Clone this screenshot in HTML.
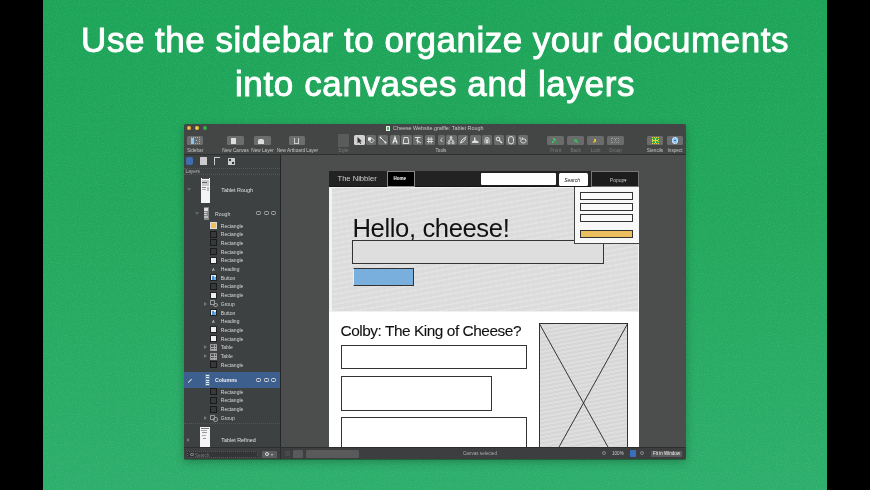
<!DOCTYPE html>
<html><head><meta charset="utf-8"><style>
*{box-sizing:border-box;margin:0;padding:0}
html,body{width:870px;height:490px;overflow:hidden;background:#000;font-family:"Liberation Sans",sans-serif}
div,span{position:absolute;white-space:nowrap}
#bg{will-change:transform;left:43px;top:0;width:784px;height:490px;background:linear-gradient(180deg,#1ca458 0%,#21a75b 40%,#28ab64 75%,#2dae6b 100%)}
.title{left:0;width:784px;text-align:center;color:#fff;font-weight:normal;font-size:35px;-webkit-text-stroke:0.9px #fff}
#win{will-change:transform;left:184px;top:124px;width:502px;height:335px;background:#444646;overflow:hidden;border-radius:1.5px;box-shadow:0 1px 0 rgba(0,0,0,0.3),0 3px 8px rgba(0,0,0,0.25)}
#sb{left:0;top:31px;width:96px;height:292px;background:#3e4141}
#sbline{left:96px;top:31px;width:1px;height:292px;background:#262626}
#cv{left:97px;top:31px;width:405px;height:292px;background:#4c4e4e;overflow:hidden}
#tbline{left:0;top:30px;width:502px;height:1px;background:#2e3030}
#bot{left:0;top:323px;width:502px;height:12px;background:#3c3e3f;border-top:1px solid #2c2e2f}
.lbl{font-size:4.7px;color:#c4c4c4;transform:translateX(-50%);line-height:5px}
.dim{color:#7a7a7a}
.tb{top:12px;height:8.5px;background:#6c6e6e;border-radius:1.5px}
.tool{top:10.7px;height:10.6px;width:10.4px;background:#6a6c6c;border-radius:1.5px}
.it{font-size:5px;color:#d8d8d8;line-height:6px}
.ico{width:7.2px;height:7px;border:0.8px solid #1a1a1a;background:#383a3a;border-radius:0.5px}
.tri{width:0;height:0;border-left:3px solid #777;border-top:2px solid transparent;border-bottom:2px solid transparent}
.dots{height:0;border-top:1px dotted #555}
</style></head><body>
<div id="bg"><svg width="784" height="490" style="position:absolute;left:0;top:0"><filter id="nz"><feTurbulence type="fractalNoise" baseFrequency="0.9" numOctaves="1" seed="3"/><feColorMatrix values="0 0 0 0 1  0 0 0 0 1  0 0 0 0 1  0 0 0 1.2 -0.55"/></filter><rect width="784" height="490" filter="url(#nz)" opacity="0.22"/></svg><div class="title" style="top:19.5px;letter-spacing:0.5px">Use the sidebar to organize your documents</div><div class="title" style="top:63.5px;letter-spacing:0.62px">into canvases and layers</div></div>
<div id="win">
<div style="left:2.6999999999999997px;top:2.2px;width:4.2px;height:4.2px;border-radius:50%;background:#f2b93c"></div><div style="left:10.9px;top:2.2px;width:4.2px;height:4.2px;border-radius:50%;background:#f5c142"></div><div style="left:18.799999999999997px;top:2.2px;width:4.2px;height:4.2px;border-radius:50%;background:#2fb14c"></div><div style="left:202px;top:1.8px;width:4.2px;height:5.4px;background:#e8f4e8;border-radius:0.5px"><div style="left:0.8px;top:1.2px;width:2.6px;height:3.4px;background:#4cb860"></div></div><div style="left:209px;top:1.2px;font-size:5.4px;color:#c8c8c8;line-height:6px">Cheese Website.graffle: Tablet Rough</div><div class="tb" style="left:2.8px;width:16.7px;"><div style="left:4px;top:1.2px;width:9px;height:6.5px;border:0.7px dotted #aaa"></div><div style="left:4.2px;top:1.5px;width:3.5px;height:6px;background:#8cc4f0"></div><div style="left:9px;top:3.5px;width:1.5px;height:1.5px;background:#8cc4f0"></div></div><div class="lbl" style="left:11.15px;top:24px">Sidebar</div><div class="tb" style="left:43.2px;width:16.599999999999994px;"><div style="left:4px;top:2px;width:5px;height:6px;background:#ddd"></div></div><div class="lbl" style="left:51.5px;top:24px">New Canvas</div><div class="tb" style="left:70.1px;width:16.80000000000001px;"><div style="left:4px;top:2.5px;width:6px;height:5px;background:#ddd;border-radius:2px 2px 0 0"></div></div><div class="lbl" style="left:78.5px;top:24px">New Layer</div><div class="tb" style="left:105.3px;width:16.10000000000001px;"><div style="left:5px;top:2px;width:5px;height:6px;border:1px solid #ccc;border-top:none"></div></div><div class="lbl" style="left:113.35px;top:24px">New Artboard Layer</div><div style="left:153.6px;top:10.3px;width:11.9px;height:12.7px;background:#5a5c5c;border-radius:1px"></div><div class="lbl dim" style="left:159.5px;top:24px">Style</div><div class="tool" style="left:170.3px;width:10.4px;background:#d2d2d2"><svg width="10.4" height="10.6" viewBox="0 0 10.4 10.6" style="position:absolute;left:0;top:0"><path d="M3.5 2 L3.5 8.5 L5 7 L6.3 9 L7.2 8.5 L6 6.5 L8 6.3 Z" fill="#333"/></svg></div><div class="tool" style="left:182.0px;width:10.4px;"><svg width="10.4" height="10.6" viewBox="0 0 10.4 10.6" style="position:absolute;left:0;top:0"><path d="M2.5 3 L5.5 3 L8 5.5 L5.5 8 L3 5.5 Z" fill="none" stroke="#eee" stroke-width="0.9"/><rect x="2" y="2.5" width="3" height="3" fill="#eee"/></svg></div><div class="tool" style="left:194.0px;width:10.4px;"><svg width="10.4" height="10.6" viewBox="0 0 10.4 10.6" style="position:absolute;left:0;top:0"><path d="M2.5 2.5 L7.5 7.5" stroke="#eee" stroke-width="0.9"/><circle cx="2.5" cy="2.5" r="0.9" fill="#eee"/><circle cx="7.5" cy="7.5" r="1" fill="#eee"/></svg></div><div class="tool" style="left:206.0px;width:10.4px;"><svg width="10.4" height="10.6" viewBox="0 0 10.4 10.6" style="position:absolute;left:0;top:0"><path d="M2.8 8.5 L5 2 L7.2 8.5 M3.6 6.3 L6.4 6.3" fill="none" stroke="#eee" stroke-width="1.1"/></svg></div><div class="tool" style="left:217.4px;width:10.4px;"><svg width="10.4" height="10.6" viewBox="0 0 10.4 10.6" style="position:absolute;left:0;top:0"><path d="M3 2.5 L7 2.5 L7.8 8.5 L2.2 8.5 Z" fill="none" stroke="#eee" stroke-width="0.9"/></svg></div><div class="tool" style="left:229.0px;width:10.4px;"><svg width="10.4" height="10.6" viewBox="0 0 10.4 10.6" style="position:absolute;left:0;top:0"><path d="M2 2.5 L7.5 2.5 M4.7 2.5 L4.7 8.5 M3 5 L8 8" fill="none" stroke="#eee" stroke-width="0.9"/></svg></div><div class="tool" style="left:241.0px;width:10.4px;"><svg width="10.4" height="10.6" viewBox="0 0 10.4 10.6" style="position:absolute;left:0;top:0"><path d="M3.8 2 L3.8 8.5 M6.2 2 L6.2 8.5 M2 4.2 L8 4.2 M2 6.5 L8 6.5" fill="none" stroke="#eee" stroke-width="0.8"/></svg></div><div class="tool" style="left:253.6px;width:7.2px;"><svg width="7.2" height="10.6" viewBox="0 0 7.2 10.6" style="position:absolute;left:0;top:0"><path d="M4.5 3 L2.5 5 L4.5 7" fill="none" stroke="#eee" stroke-width="0.9"/></svg></div><div class="tool" style="left:262.3px;width:10.4px;"><svg width="10.4" height="10.6" viewBox="0 0 10.4 10.6" style="position:absolute;left:0;top:0"><path d="M5 2 L5 5 M3 5 L7 5 M3 5 L3 7 M7 5 L7 7" fill="none" stroke="#eee" stroke-width="0.8"/><circle cx="3" cy="7.8" r="1.1" fill="none" stroke="#eee" stroke-width="0.8"/><circle cx="7" cy="7.8" r="1.1" fill="none" stroke="#eee" stroke-width="0.8"/><circle cx="5" cy="2.5" r="1" fill="none" stroke="#eee" stroke-width="0.8"/></svg></div><div class="tool" style="left:274.0px;width:10.4px;"><svg width="10.4" height="10.6" viewBox="0 0 10.4 10.6" style="position:absolute;left:0;top:0"><path d="M2.5 8 L4 5 L6.5 3 L7.5 4 L5.5 6.5 Z M6.5 3 L8.3 1.8" fill="none" stroke="#eee" stroke-width="0.9"/></svg></div><div class="tool" style="left:286.3px;width:10.4px;"><svg width="10.4" height="10.6" viewBox="0 0 10.4 10.6" style="position:absolute;left:0;top:0"><path d="M2 8 L8.5 8 L8.5 6.5 L6.5 5.5 L5.5 5.5 L5.5 2.5 L4 2.5 L4 5.5 L2 6.5 Z" fill="#ddd"/></svg></div><div class="tool" style="left:298.0px;width:10.4px;"><svg width="10.4" height="10.6" viewBox="0 0 10.4 10.6" style="position:absolute;left:0;top:0"><path d="M3 8.5 L3 4.5 A2 2 0 0 1 7 4.5 L7 8.5 M4.5 8.5 L4.5 4.5 A0.5 0.5 0 0 1 5.5 4.5 L5.5 8.5" fill="none" stroke="#eee" stroke-width="0.8"/></svg></div><div class="tool" style="left:310.0px;width:10.4px;"><svg width="10.4" height="10.6" viewBox="0 0 10.4 10.6" style="position:absolute;left:0;top:0"><circle cx="4" cy="4" r="1.8" fill="none" stroke="#eee" stroke-width="0.9"/><path d="M5.3 5.3 L8 8" stroke="#eee" stroke-width="1.1"/></svg></div><div class="tool" style="left:322.0px;width:10.4px;"><svg width="10.4" height="10.6" viewBox="0 0 10.4 10.6" style="position:absolute;left:0;top:0"><path d="M2.5 6 L2.5 4 A2.5 2.5 0 0 1 7.5 4 L7.5 6.5 A2.5 2.5 0 0 1 2.5 6.5 Z" fill="none" stroke="#eee" stroke-width="0.9"/></svg></div><div class="tool" style="left:333.8px;width:10.4px;"><svg width="10.4" height="10.6" viewBox="0 0 10.4 10.6" style="position:absolute;left:0;top:0"><path d="M3 6 L3 3.5 M4.5 5 L4.5 2.5 M6 5 L6 3 M7.5 5.5 L7.5 4 M2.5 6 A3 3 0 0 0 8 6.5 L8 5" fill="none" stroke="#eee" stroke-width="0.8"/><circle cx="2" cy="3" r="0.7" fill="#eee"/></svg></div><div class="lbl" style="left:257px;top:24px">Tools</div><div class="tb" style="left:363.4px;width:16.600000000000023px;background:#6a6c6c"><div style="left:5.5px;top:1.5px;width:2.5px;height:2.5px;background:#3cc060"></div><div style="left:7px;top:3.2px;width:2px;height:2px;background:#3cc060"></div><div style="left:5px;top:4.5px;width:2px;height:2px;background:#3cc060"></div><div style="left:8.5px;top:5.5px;width:2px;height:2px;background:#2a9a48"></div></div><div class="lbl dim" style="left:371.7px;top:24px">Front</div><div class="tb" style="left:383.3px;width:16.599999999999966px;background:#6a6c6c"><div style="left:7px;top:3px;width:2.5px;height:2.5px;background:#3cc060;opacity:.7"></div><div style="left:9px;top:5px;width:2px;height:2px;background:#3cc060;opacity:.7"></div></div><div class="lbl dim" style="left:391.6px;top:24px">Back</div><div class="tb" style="left:403.4px;width:16.600000000000023px;background:#6a6c6c"><div style="left:7px;top:3px;width:2px;height:3px;background:#e0c040"></div><div style="left:6px;top:5px;width:2px;height:2px;background:#c0a030"></div></div><div class="lbl dim" style="left:411.7px;top:24px">Lock</div><div class="tb" style="left:423.3px;width:16.30000000000001px;background:#6a6c6c"><div style="left:4px;top:1.5px;width:8px;height:5.5px;border:0.7px dotted #999"></div><div style="left:7.5px;top:3px;width:1.5px;height:1.5px;background:#4c8"></div></div><div class="lbl dim" style="left:431.45000000000005px;top:24px">Group</div><div class="tb" style="left:463px;width:16px;"><div style="left:4.5px;top:1px;width:7px;height:6.5px;background:#35a84a;border:0.9px dotted #e8d040"></div><div style="left:7.5px;top:1.5px;width:0.7px;height:5.5px;background:#e8d040"></div><div style="left:5px;top:4px;width:6px;height:0.7px;background:#e8d040"></div></div><div class="lbl" style="left:471.0px;top:24px">Stencils</div><div class="tb" style="left:482.9px;width:16.30000000000001px;"><div style="left:4.8px;top:1px;width:6.8px;height:6.8px;background:#8cc8f8;border-radius:50%;border:1px dotted #fff"></div><div style="left:7.3px;top:3.5px;width:1.8px;height:1.8px;background:#2a5fb0;border-radius:50%"></div></div><div class="lbl" style="left:491.04999999999995px;top:24px">Inspect</div><div id="tbline"></div>
<div id="sb"><div style="left:2px;top:2px;width:7px;height:8px;background:#3f6db0;border-radius:2px"></div><div style="left:16px;top:2px;width:7px;height:8px;background:#ccc;border-radius:0.5px"></div><div style="left:30px;top:2px;width:6px;height:8px;border-left:1px solid #ccc;border-top:1px solid #ccc"></div><div style="left:44px;top:2.5px;width:6.5px;height:7px;background:#ccc;border-radius:0.5px"><div style="left:1px;top:1px;width:2px;height:2px;background:#333"></div><div style="left:3.5px;top:4px;width:2px;height:2px;background:#333"></div></div><div class="dots" style="left:0;top:13px;width:96px"></div><div class="it" style="left:1.5px;top:13.5px;font-size:4.8px;color:#bbb">Layers</div><div class="dots" style="left:0;top:19px;width:96px"></div><div style="left:16.80000000000001px;top:22.599999999999994px;width:9.4px;height:25px;background:#f4f4f4"><div style="left:0.8px;top:0.5px;width:7.8px;height:1.2px;background:#555"></div><div style="left:0.8px;top:2.5px;width:7.8px;height:6px;background:#c8c8c8"></div><div style="left:1.5px;top:4px;width:5px;height:1px;background:#666"></div><div style="left:1.5px;top:9.5px;width:4px;height:1px;background:#888"></div><div style="left:1.5px;top:11px;width:4px;height:1px;background:#aaa"></div><div style="left:6.5px;top:9.5px;width:1.8px;height:3.5px;background:#bbb"></div></div><div class="it" style="left:37.2px;top:32.2px;font-size:5.4px;color:#e0e0e0;">Tablet Rough</div><div style="left:3px;top:32.69999999999999px;border-top:3px solid #666;border-left:2px solid transparent;border-right:2px solid transparent;width:0;height:0"></div><div style="left:19.599999999999994px;top:52px;width:5px;height:13.4px;background:#888"><div style="left:0.5px;top:0.5px;width:4px;height:3px;background:#ddd"></div><div style="left:0.5px;top:5px;width:3px;height:1px;background:#ccc"></div><div style="left:0.5px;top:7px;width:3px;height:1px;background:#ccc"></div><div style="left:0.5px;top:9px;width:4px;height:2px;background:#bbb"></div></div><div class="it" style="left:31.0px;top:55.7px;font-size:5.2px;color:#d8d8d8;">Rough</div><div style="left:11px;top:57px;border-top:3px solid #666;border-left:2px solid transparent;border-right:2px solid transparent;width:0;height:0"></div><div style="left:72px;top:56px;width:5px;height:4px;border:0.8px solid #aaa;border-radius:1.5px"></div><div style="left:80px;top:56px;width:5px;height:4px;border:0.8px solid #aaa;border-radius:1.5px"></div><div style="left:87px;top:56px;width:5px;height:4px;border:0.8px solid #aaa;border-radius:1.5px"></div><div class="it" style="left:36.8px;top:67.5px;font-size:5.0px;color:#d8d8d8;">Rectangle</div><div class="ico" style="left:26.1px;top:67.0px;background:#f0c050;border-color:#ddd"></div><div class="it" style="left:36.8px;top:76.2px;font-size:5.0px;color:#d8d8d8;">Rectangle</div><div class="ico" style="left:26.1px;top:75.7px"></div><div class="it" style="left:36.8px;top:84.9px;font-size:5.0px;color:#d8d8d8;">Rectangle</div><div class="ico" style="left:26.1px;top:84.4px"></div><div class="it" style="left:36.8px;top:93.6px;font-size:5.0px;color:#d8d8d8;">Rectangle</div><div class="ico" style="left:26.1px;top:93.1px"></div><div class="it" style="left:36.8px;top:102.3px;font-size:5.0px;color:#d8d8d8;">Rectangle</div><div class="ico" style="left:26.1px;top:101.8px;background:#eee;border-color:#222"></div><div class="it" style="left:36.8px;top:111.0px;font-size:5.0px;color:#d8d8d8;">Heading</div><div style="left:28.1px;top:111.5px;font-size:4px;color:#ccc">A</div><div class="it" style="left:36.8px;top:119.7px;font-size:5.0px;color:#d8d8d8;">Button</div><div class="ico" style="left:26.1px;top:119.2px;background:#dfeaf5;border-color:#222"><div style="left:1px;top:1px;width:2px;height:3.5px;background:#4a90d9"></div><div style="left:3px;top:2px;width:2px;height:2.5px;background:#6ab0e9"></div></div><div class="it" style="left:36.8px;top:128.4px;font-size:5.0px;color:#d8d8d8;">Rectangle</div><div class="ico" style="left:26.1px;top:127.9px"></div><div class="it" style="left:36.8px;top:137.1px;font-size:5.0px;color:#d8d8d8;">Rectangle</div><div class="ico" style="left:26.1px;top:136.6px;background:#eee;border-color:#222"></div><div class="it" style="left:36.8px;top:145.8px;font-size:5.0px;color:#d8d8d8;">Group</div><div class="ico" style="left:26.1px;top:145.3px;width:5px;height:5px;background:transparent;border-color:#999"></div><div class="ico" style="left:28.6px;top:147.8px;width:5px;height:4.5px;background:transparent;border-color:#999;border-radius:2px"></div><div class="tri" style="left:20.0px;top:146.8px"></div><div class="it" style="left:36.8px;top:154.5px;font-size:5.0px;color:#d8d8d8;">Button</div><div class="ico" style="left:26.1px;top:154.0px;background:#dfeaf5;border-color:#222"><div style="left:1px;top:1px;width:2px;height:3.5px;background:#4a90d9"></div><div style="left:3px;top:2px;width:2px;height:2.5px;background:#6ab0e9"></div></div><div class="it" style="left:36.8px;top:163.2px;font-size:5.0px;color:#d8d8d8;">Heading</div><div style="left:28.1px;top:163.7px;font-size:4px;color:#ccc">A</div><div class="it" style="left:36.8px;top:171.9px;font-size:5.0px;color:#d8d8d8;">Rectangle</div><div class="ico" style="left:26.1px;top:171.4px;background:#eee;border-color:#222"></div><div class="it" style="left:36.8px;top:180.6px;font-size:5.0px;color:#d8d8d8;">Rectangle</div><div class="ico" style="left:26.1px;top:180.1px;background:#eee;border-color:#222"></div><div class="it" style="left:36.8px;top:189.3px;font-size:5.0px;color:#d8d8d8;">Table</div><div class="ico" style="left:26.1px;top:188.8px;background:#555;border-color:#999"><div style="left:0;top:2px;width:6px;height:0.6px;background:#aaa"></div><div style="left:0;top:4px;width:6px;height:0.6px;background:#aaa"></div><div style="left:2.5px;top:0;width:0.6px;height:6px;background:#aaa"></div></div><div class="tri" style="left:20.0px;top:190.3px"></div><div class="it" style="left:36.8px;top:198.0px;font-size:5.0px;color:#d8d8d8;">Table</div><div class="ico" style="left:26.1px;top:197.5px;background:#555;border-color:#999"><div style="left:0;top:2px;width:6px;height:0.6px;background:#aaa"></div><div style="left:0;top:4px;width:6px;height:0.6px;background:#aaa"></div><div style="left:2.5px;top:0;width:0.6px;height:6px;background:#aaa"></div></div><div class="tri" style="left:20.0px;top:199.0px"></div><div class="it" style="left:36.8px;top:206.7px;font-size:5.0px;color:#d8d8d8;">Rectangle</div><div class="ico" style="left:26.1px;top:206.2px"></div><div style="left:0px;top:217.10000000000002px;width:96px;height:15.5px;background:#3c5f8e"></div><div style="left:21px;top:218.8px;width:4.5px;height:12.5px;background:#5d7ba3"><div style="left:0.5px;top:1px;width:3.5px;height:1px;background:#e8eef5"></div><div style="left:0.5px;top:3.5px;width:3px;height:1px;background:#e8eef5"></div><div style="left:0.5px;top:6px;width:3.5px;height:1px;background:#e8eef5"></div><div style="left:0.5px;top:8.5px;width:3px;height:1px;background:#e8eef5"></div><div style="left:0.5px;top:10.5px;width:3.5px;height:1px;background:#e8eef5"></div></div><div class="it" style="left:31.0px;top:222.0px;font-size:5.2px;color:#f0f0f0;font-weight:bold">Columns</div><div style="left:2px;top:222px;width:5px;height:5px;border-bottom:1px solid #ddd;transform:rotate(-45deg)"></div><div style="left:72px;top:223px;width:5px;height:4px;border:0.8px solid #ddd;border-radius:1.5px"></div><div style="left:80px;top:223px;width:5px;height:4px;border:0.8px solid #ddd;border-radius:1.5px"></div><div style="left:87px;top:223px;width:5px;height:4px;border:0.8px solid #ddd;border-radius:1.5px"></div><div class="it" style="left:36.8px;top:233.7px;font-size:5.0px;color:#d8d8d8;">Rectangle</div><div class="ico" style="left:26.1px;top:233.2px"></div><div class="it" style="left:36.8px;top:242.4px;font-size:5.0px;color:#d8d8d8;">Rectangle</div><div class="ico" style="left:26.1px;top:241.9px"></div><div class="it" style="left:36.8px;top:251.1px;font-size:5.0px;color:#d8d8d8;">Rectangle</div><div class="ico" style="left:26.1px;top:250.6px"></div><div class="it" style="left:36.8px;top:260.0px;font-size:5.0px;color:#d8d8d8;">Group</div><div class="ico" style="left:26.1px;top:259.5px;width:5px;height:5px;background:transparent;border-color:#999"></div><div class="ico" style="left:28.6px;top:262.0px;width:5px;height:4.5px;background:transparent;border-color:#999;border-radius:2px"></div><div class="tri" style="left:20.0px;top:261.0px"></div><div class="dots" style="left:0;top:268px;width:96px"></div><div style="left:16.400000000000006px;top:272.2px;width:10px;height:20px;background:#f4f4f4"><div style="left:1px;top:1px;width:8px;height:1px;background:#777"></div><div style="left:1px;top:3px;width:6px;height:1px;background:#aaa"></div><div style="left:1.5px;top:5px;width:5px;height:1px;background:#999"></div><div style="left:1.5px;top:8px;width:4px;height:1px;background:#aaa"></div><div style="left:3px;top:11px;width:3px;height:1px;background:#999"></div></div><div class="it" style="left:37.3px;top:282.0px;font-size:5.4px;color:#e0e0e0;">Tablet Refined</div><div class="tri" style="left:3px;top:283px"></div></div>
<div id="sbline"></div>
<div id="cv"><div style="left:48px;top:16px;width:309.7px;height:280px;background:#fff"></div><div style="left:48px;top:16px;width:309.7px;height:16px;background:#222;border-bottom:1.5px solid #151515"></div><div style="left:56.5px;top:20.19999999999999px;font-size:7.6px;color:#d0d0d0;line-height:8px">The Nibbler</div><div style="left:105.60000000000002px;top:15.5px;width:28px;height:16px;background:#000;border:1px solid #888"><div style="left:6px;top:4.5px;font-size:4.5px;color:#fff;font-weight:bold">Home</div></div><div style="left:200.2px;top:17.80000000000001px;width:75.2px;height:11.9px;background:#fff;border-radius:1px"></div><div style="left:278.20000000000005px;top:18.19999999999999px;width:29.2px;height:12.4px;background:#fff;border-radius:1.5px"><div style="left:5px;top:3.5px;font-size:5px;color:#222;font-style:italic">Search</div></div><div style="left:310.29999999999995px;top:16.400000000000006px;width:48px;height:15.8px;background:#1c1c1c;border:1px solid #777"><div style="left:17.5px;top:4.2px;font-size:5px;color:#c0c0c0">Popup&#9662;</div></div><div style="left:48px;top:32px;width:309.7px;height:124.6px;background:repeating-linear-gradient(-10deg,#dcdcdc 0px,#dcdcdc 3.5px,#e3e3e3 3.5px,#e3e3e3 5px);border:1.5px solid #f0f0f0;border-top:1px solid #f0f0f0;border-left:3px solid #f2f2f2"></div><div style="left:71.5px;top:60px;font-size:25.6px;color:#111;line-height:26px;letter-spacing:-0.38px">Hello, cheese!</div><div style="left:71.39999999999998px;top:84.69999999999999px;width:251.7px;height:24.1px;border:1px solid #333;background:#dedede"></div><div style="left:72.19999999999999px;top:112.5px;width:60.7px;height:18.5px;border:1px solid #333;border-left:1px solid #eee;background:#78afdd"></div><div style="left:293.29999999999995px;top:32.19999999999999px;width:64.4px;height:57.3px;background:#f8f8f8;border:1px solid #444;border-top:none;border-right:none"><div style="left:4.5px;top:5px;width:53.5px;height:7.5px;border:1.2px solid #333;background:#fafafa"></div><div style="left:4.5px;top:16.3px;width:53.5px;height:7.5px;border:1.2px solid #333;background:#fafafa"></div><div style="left:4.5px;top:27.2px;width:53.5px;height:7.5px;border:1.2px solid #333;background:#fafafa"></div><div style="left:4.5px;top:43px;width:53.5px;height:7.8px;border:1.2px solid #333;background:#ecc05e"></div></div><div style="left:59.5px;top:168px;font-size:15.4px;color:#111;line-height:16px;letter-spacing:-0.45px;-webkit-text-stroke:0.1px #111">Colby: The King of Cheese?</div><div style="left:59.69999999999999px;top:189.89999999999998px;width:186.0px;height:24.6px;border:1px solid #333;background:#fff"></div><div style="left:59.69999999999999px;top:220.89999999999998px;width:151.5px;height:35.0px;border:1px solid #333;background:#fff"></div><div style="left:59.69999999999999px;top:261.9px;width:186.0px;height:43.1px;border:1px solid #333;background:#fff"></div><div style="left:258.20000000000005px;top:168px;width:88.7px;height:160px;background:repeating-linear-gradient(-10deg,#d6d6d6 0px,#d6d6d6 2px,#dedede 2px,#dedede 4px);border:1px solid #333"></div><svg style="position:absolute;left:258.20000000000005px;top:168px" width="89" height="160"><line x1="0" y1="0" x2="89" y2="160" stroke="#222" stroke-width="0.9"/><line x1="89" y1="0" x2="0" y2="160" stroke="#222" stroke-width="0.9"/></svg></div>
<div id="bot"><div style="left:101px;top:3px;width:4.5px;height:4.5px;background:#4a4a4a"></div><div style="left:109px;top:1.5px;width:10px;height:8.5px;background:#5a5a5a;border-radius:1.5px"></div><div style="left:122px;top:1.5px;width:53px;height:8.5px;background:#5a5a5a;border-radius:1.5px"></div><div style="left:279px;top:3px;font-size:4.6px;color:#aaa;line-height:5px">Canvas selected</div><div style="left:418px;top:2.5px;width:4px;height:4px;border:0.8px solid #888;border-radius:50%"></div><div style="left:428px;top:3px;font-size:4.6px;color:#ccc;line-height:5px">100%</div><div style="left:446px;top:2px;width:6px;height:7px;background:#3a6fc0;border-radius:1px"></div><div style="left:456px;top:2.5px;width:4px;height:4px;border:0.8px solid #888;border-radius:50%"></div><div style="left:467px;top:2.5px;width:31.4px;height:6.2px;background:#5a5a5a;border-radius:1px"><div style="left:2px;top:0.6px;font-size:4.5px;color:#eee;line-height:5px">Fit in Window</div></div><div style="left:3px;top:2.5px;width:71px;height:7.5px;background:#333536;border:0.6px dotted #555;border-radius:1px"><div style="left:2px;top:1.3px;width:3.5px;height:3.5px;border:0.7px solid #999;border-radius:50%"></div><div style="left:7px;top:1.2px;font-size:4.5px;color:#777;line-height:5px">Search</div></div><div style="left:78px;top:2.5px;width:14.5px;height:7.5px;background:#5c5e5e;border-radius:1px"><div style="left:3px;top:1.5px;width:4px;height:4px;border:1.2px solid #ddd;border-radius:50%"></div><div style="left:9px;top:3px;border-top:2px solid #ccc;border-left:1.5px solid transparent;border-right:1.5px solid transparent;width:0;height:0"></div></div><div style="left:96px;top:0;width:1px;height:12px;background:#2a2c2d"></div></div>
</div>
</body></html>
